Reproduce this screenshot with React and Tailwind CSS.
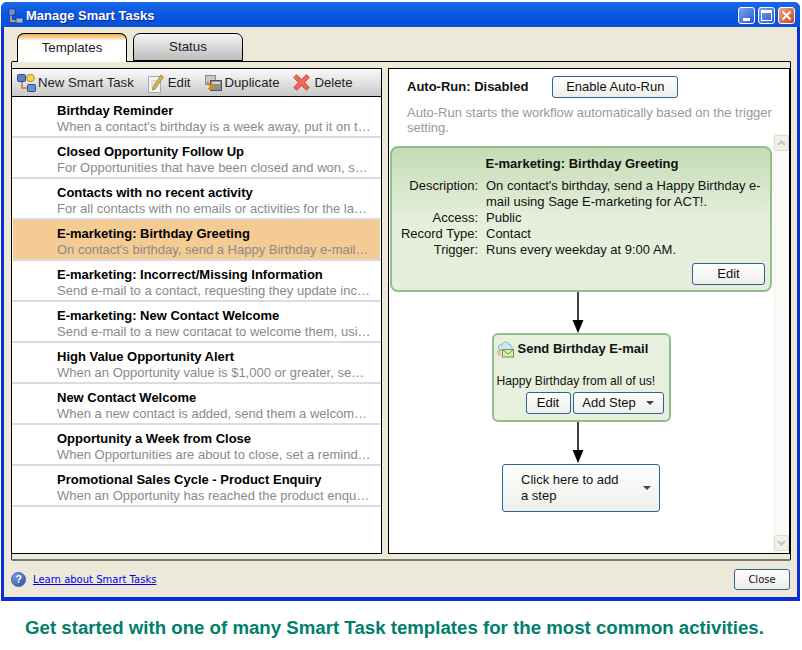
import React from "react";

const tasks = [
  ["Birthday Reminder", "When a contact's birthday is a week away, put it on t…"],
  ["Closed Opportunity Follow Up", "For Opportunities that have been closed and won, s…"],
  ["Contacts with no recent activity", "For all contacts with no emails or activities for the la…"],
  ["E-marketing: Birthday Greeting", "On contact's birthday, send a Happy Birthday e-mail…"],
  ["E-marketing: Incorrect/Missing Information", "Send e-mail to a contact, requesting they update inc…"],
  ["E-marketing: New Contact Welcome", "Send e-mail to a new contacat to welcome them, usi…"],
  ["High Value Opportunity Alert", "When an Opportunity value is $1,000 or greater, se…"],
  ["New Contact Welcome", "When a new contact is added, send them a welcom…"],
  ["Opportunity a Week from Close", "When Opportunities are about to close, set a remind…"],
  ["Promotional Sales Cycle - Product Enquiry", "When an Opportunity has reached the product enqu…"],
];

const btn = "flex items-center justify-center rounded-[3px] border border-[#2f6396] bg-gradient-to-b from-white to-[#eeeeea] text-[13px] text-[#111]";

function Arrow() {
  return (
    <svg width="12" height="41" viewBox="0 0 12 41" className="mr-[6px] block shrink-0">
      <line x1="6" y1="0" x2="6" y2="30" stroke="#000" strokeWidth="1.5" />
      <path d="M0.5 28 H11.5 L6 41 Z" fill="#000" />
    </svg>
  );
}

function Caret() {
  return <span className="block h-0 w-0 border-x-[4px] border-t-[4px] border-x-transparent border-t-[#444]" />;
}

function GroupIcon() {
  return (
    <svg width="19" height="19" viewBox="0 0 19 19">
      <path d="M5 8v7h6" stroke="#c08a20" strokeWidth="1.6" fill="none" />
      <rect x="0.5" y="1.5" width="8" height="7" rx="1" fill="#5b7fc4" stroke="#2d4a8c" />
      <circle cx="13.5" cy="5" r="3.8" fill="#f3cf55" stroke="#bd9327" />
      <rect x="10.5" y="11.5" width="8" height="7" rx="1" fill="#6b8fd0" stroke="#2d4a8c" />
    </svg>
  );
}

function EditIcon() {
  return (
    <svg width="16" height="20" viewBox="0 0 16 20" className="block">
      <rect x="0.5" y="3.5" width="12" height="16" fill="#f3f3f3" stroke="#a9a9b4" />
      <path d="M3 8h6M3 11h4M3 14h3" stroke="#c4c4c8" />
      <path d="M5 14 L13 2 L15.5 4 L7 16 L4.5 17 Z" fill="#e0b64c" stroke="#8a6a20" strokeWidth="0.7" />
    </svg>
  );
}

function DuplicateIcon() {
  return (
    <svg width="17" height="18" viewBox="0 0 17 18" className="block">
      <rect x="0.5" y="1.5" width="10" height="9" fill="#c9c9c9" stroke="#8a8a8a" />
      <rect x="5.5" y="6.5" width="11" height="10" fill="#8f8f8f" stroke="#555" />
      <rect x="7" y="8" width="8" height="2" fill="#dadada" />
      <path d="M2 8 L7 14 M7.5 9.5 V14.5 H3" stroke="#e08a1e" strokeWidth="2" fill="none" />
    </svg>
  );
}

function DeleteIcon() {
  return (
    <svg width="17" height="17" viewBox="0 0 17 17" className="block">
      <path d="M0.8 3.5 L3.5 0.8 L8.5 5.5 L13.5 0.8 L16.2 3.5 L11.5 8.5 L16.2 13.5 L13.5 16.2 L8.5 11.5 L3.5 16.2 L0.8 13.5 L5.5 8.5 Z" fill="#ee6a5c" stroke="#c9443a" strokeWidth="1" />
    </svg>
  );
}

function MailIcon() {
  return (
    <svg width="17" height="17" viewBox="0 0 17 17" className="block shrink-0">
      <path d="M2 8 C0 5 3 3 5 4 C6 0 11 0 12 4 C15 4 16 7 14 9 H3 Z" fill="#cfe6f5" stroke="#6c9cc4" strokeWidth="0.8" />
      <rect x="5.5" y="8.5" width="11" height="7.5" fill="#d9edb5" stroke="#6f9a3a" />
      <path d="M5.5 8.5 L11 13 L16.5 8.5" fill="none" stroke="#6f9a3a" />
      <path d="M0 10h4M0 12h4M1 14h3" stroke="#e09a4a" />
    </svg>
  );
}

function TreeIcon() {
  return (
    <svg width="16" height="16" viewBox="0 0 16 16" className="shrink-0">
      <path d="M3 7v6h5" stroke="#f2c040" strokeWidth="1.4" fill="none" />
      <rect x="1" y="1" width="6" height="6" fill="#7a93c8" stroke="#23366e" strokeWidth="0.7" />
      <rect x="8" y="10" width="7" height="5" fill="#9db4e0" stroke="#23366e" strokeWidth="0.7" />
    </svg>
  );
}

function WinButton({ children, red }) {
  return (
    <div className={`flex h-[17px] w-[17px] items-center justify-center rounded-[3px] border border-white ${red ? "bg-gradient-to-br from-[#e9a48c] to-[#c8401c]" : "bg-gradient-to-br from-[#7fa4f0] to-[#2a56cf]"}`}>
      {children}
    </div>
  );
}

function ScrollButton({ up }) {
  return (
    <div className="flex h-[16px] w-[15px] items-center justify-center rounded-[2px] border border-[#dcdcd2] bg-[#f1f1ea]">
      <svg width="9" height="6" viewBox="0 0 9 6">
        <path d={up ? "M1 5 L4.5 1.5 L8 5" : "M1 1 L4.5 4.5 L8 1"} fill="none" stroke="#c4c4bc" strokeWidth="2" />
      </svg>
    </div>
  );
}

function DetailRow({ label, children }) {
  return (
    <div className="flex">
      <div className="w-[86px] shrink-0 text-right">{label}</div>
      <div className="ml-[8px] w-[278px]">{children}</div>
    </div>
  );
}

export default function App() {
  return (
    <div className="relative h-[650px] w-[802px] overflow-hidden bg-white font-['Liberation_Sans',Arial,sans-serif]">
      <div className="ml-px mt-[2px] flex h-[599px] w-[799px] flex-col rounded-t-[6px] bg-[#0a2fd6] px-[3px] pb-[4px]">
        {/* title bar */}
        <div className="-mx-[3px] flex h-[25px] shrink-0 items-center rounded-t-[6px] bg-gradient-to-b from-[#1a6ae8] via-[#0a55e0] to-[#0a4fd8] pl-[7px] pr-[4px] pt-[2px]">
          <TreeIcon />
          <span className="ml-[2px] text-[13px] font-bold text-white [text-shadow:1px_1px_0_#0a2a90]">Manage Smart Tasks</span>
          <div className="ml-auto mr-px flex gap-[3px]">
            <WinButton><span className="mt-[8px] h-[3px] w-[7px] bg-white" /></WinButton>
            <WinButton><span className="h-[11px] w-[11px] border border-t-[3px] border-white" /></WinButton>
            <WinButton red>
              <svg width="11" height="11" viewBox="0 0 11 11"><path d="M1.5 1.5 L9.5 9.5 M9.5 1.5 L1.5 9.5" stroke="#fff" strokeWidth="2" /></svg>
            </WinButton>
          </div>
        </div>

        {/* dialog body */}
        <div className="flex min-h-0 flex-1 flex-col bg-[#ece9d8] pl-[7px] pr-[6px] pt-[6px]">
          {/* tabs */}
          <div className="z-10 -mb-px ml-[6px] flex h-[29px] shrink-0 gap-[6px]">
            <div className="flex h-[29px] w-[110px] items-center justify-center rounded-t-[7px] border border-b-0 border-black text-[13.33px] text-[#222] [background-image:linear-gradient(to_bottom,#f4a640,#fff_7px,#fff)]">
              Templates
            </div>
            <div className="flex h-[28px] w-[110px] items-center justify-center rounded-t-[7px] border border-black bg-gradient-to-b from-[#f4f4f4] to-[#bdbdbd] text-[13.33px] text-[#222]">
              Status
            </div>
          </div>

          {/* panel */}
          <div className="flex h-[500px] w-[780px] shrink-0 gap-[6px] rounded-[2px] border-t border-r border-l border-black border-b-2 border-b-[#777] border-l-[#222] pb-[5px] pt-[6px]">
            {/* left list */}
            <div className="-ml-px flex w-[371px] shrink-0 flex-col border border-black bg-white">
              <div className="flex h-[28px] shrink-0 items-center border-b border-black bg-gradient-to-b from-[#fbfbfb] to-[#c9c9c9] pl-[5px] text-[13.2px] text-[#222]">
                <GroupIcon />
                <span className="ml-[2px]">New Smart Task</span>
                <span className="ml-[14px]"><EditIcon /></span>
                <span className="ml-[4px]">Edit</span>
                <span className="ml-[14px]"><DuplicateIcon /></span>
                <span className="ml-[3px]">Duplicate</span>
                <span className="ml-[14px]"><DeleteIcon /></span>
                <span className="ml-[4px]">Delete</span>
              </div>
              <div className="flex-1">
                {tasks.map(([title, desc], i) => (
                  <div key={title} className="h-[41px] border-b-2 border-[#dcdcdc] pl-px pr-[1px]">
                    <div className={`h-[39px] pl-[44px] pt-[6px] ${i === 3 ? "bg-[#f5cb94]" : ""}`}>
                      <div className="text-[13px] font-bold leading-[16px] text-black">{title}</div>
                      <div className="whitespace-nowrap text-[13px] leading-[16px] text-[#8a8a8a]">{desc}</div>
                    </div>
                  </div>
                ))}
              </div>
            </div>

            {/* right panel */}
            <div className="flex min-w-0 flex-1 flex-col border border-black bg-white">
              <div className="h-[64px] shrink-0 pl-[18px]">
                <div className="flex h-[35px] items-center">
                  <span className="text-[13px] font-bold text-[#111]">Auto-Run: Disabled</span>
                  <div className={`${btn} ml-[24px] h-[22px] w-[126px]`}>Enable Auto-Run</div>
                </div>
                <div className="mt-px w-[370px] text-[13px] leading-[15px] text-[#999]">
                  Auto-Run starts the workflow automatically based on the trigger setting.
                </div>
              </div>

              <div className="flex min-h-0 flex-1">
                <div className="flex w-[384px] shrink-0 flex-col items-center pt-[13px]">
                  {/* green card */}
                  <div className="h-[146px] w-[382px] shrink-0 rounded-[8px] border-2 border-[#8fc08a] bg-gradient-to-b from-[#c4dcb4] via-[#e6efdc] to-[#e6efdc] pt-[8px] text-[13px] leading-[16px] text-[#111]">
                    <div className="pl-[2px] text-center text-[13px] font-bold">E-marketing: Birthday Greeting</div>
                    <div className="mt-[6px]">
                      <DetailRow label="Description:">On contact's birthday, send a Happy Birthday e-mail using Sage E-marketing for ACT!.</DetailRow>
                      <DetailRow label="Access:">Public</DetailRow>
                      <DetailRow label="Record Type:">Contact</DetailRow>
                      <DetailRow label="Trigger:">Runs every weekday at 9:00 AM.</DetailRow>
                    </div>
                    <div className="mr-[5px] mt-[5px] flex justify-end">
                      <div className={`${btn} h-[22px] w-[73px]`}>Edit</div>
                    </div>
                  </div>

                  <Arrow />

                  {/* step */}
                  <div className="h-[89px] w-[179px] shrink-0 rounded-[6px] border-2 border-[#8fc08a] bg-[#e7efdd] text-[13px] text-[#111]">
                    <div className="flex items-center pl-[3px] pt-[5px]">
                      <MailIcon />
                      <span className="ml-[4px] text-[13px] font-bold leading-[18px]">Send Birthday E-mail</span>
                    </div>
                    <div className="mt-[15px] whitespace-nowrap pl-[3px] text-[12.1px] leading-[16px]">Happy Birthday from all of us!</div>
                    <div className="mt-[3px] flex justify-end gap-[2px] pr-[5px]">
                      <div className={`${btn} h-[22px] w-[45px]`}>Edit</div>
                      <div className={`${btn} h-[22px] w-[91px] gap-[10px]`}>Add Step <Caret /></div>
                    </div>
                  </div>

                  <Arrow />

                  {/* add step */}
                  <div className="mt-[1px] flex h-[48px] w-[158px] shrink-0 items-center rounded-[3px] border border-[#2f6396] bg-gradient-to-b from-white to-[#eeeeea] pl-[18px] pr-[8px] text-[13px] leading-[16px] text-[#111]">
                    <span className="w-[100px]">Click here to add a step</span>
                    <span className="ml-auto"><Caret /></span>
                  </div>
                </div>

                {/* scrollbar */}
                <div className="flex w-[16px] flex-col justify-between bg-gradient-to-r from-[#f7f7f4] to-[#fdfdfb] py-[2px] pl-px">
                  <ScrollButton up />
                  <ScrollButton />
                </div>
              </div>
            </div>
          </div>

          {/* footer */}
          <div className="flex w-[780px] flex-1 items-center justify-between pt-[1px]">
            <div className="flex items-center">
              <div className="flex h-[15px] w-[15px] items-center justify-center rounded-full border border-[#3b5cae] bg-gradient-to-br from-[#7f9fe0] to-[#2f50a8] text-[11px] font-bold leading-none text-white">?</div>
              <span className="ml-[7px] font-['DejaVu_Sans',sans-serif] text-[10px] text-[#0000ee] underline">Learn about Smart Tasks</span>
            </div>
            <div className="mr-px flex h-[21px] w-[56px] items-center justify-center rounded-[3px] border border-[#2f6396] bg-gradient-to-b from-white to-[#ecebe4] font-['DejaVu_Sans',sans-serif] text-[10px] text-[#111]">Close</div>
          </div>
        </div>
      </div>

      <div className="mt-[16px] pr-[13px] text-center text-[18.67px] font-bold leading-[22px] text-[#00806a]">
        Get started with one of many Smart Task templates for the most common activities.
      </div>
    </div>
  );
}
